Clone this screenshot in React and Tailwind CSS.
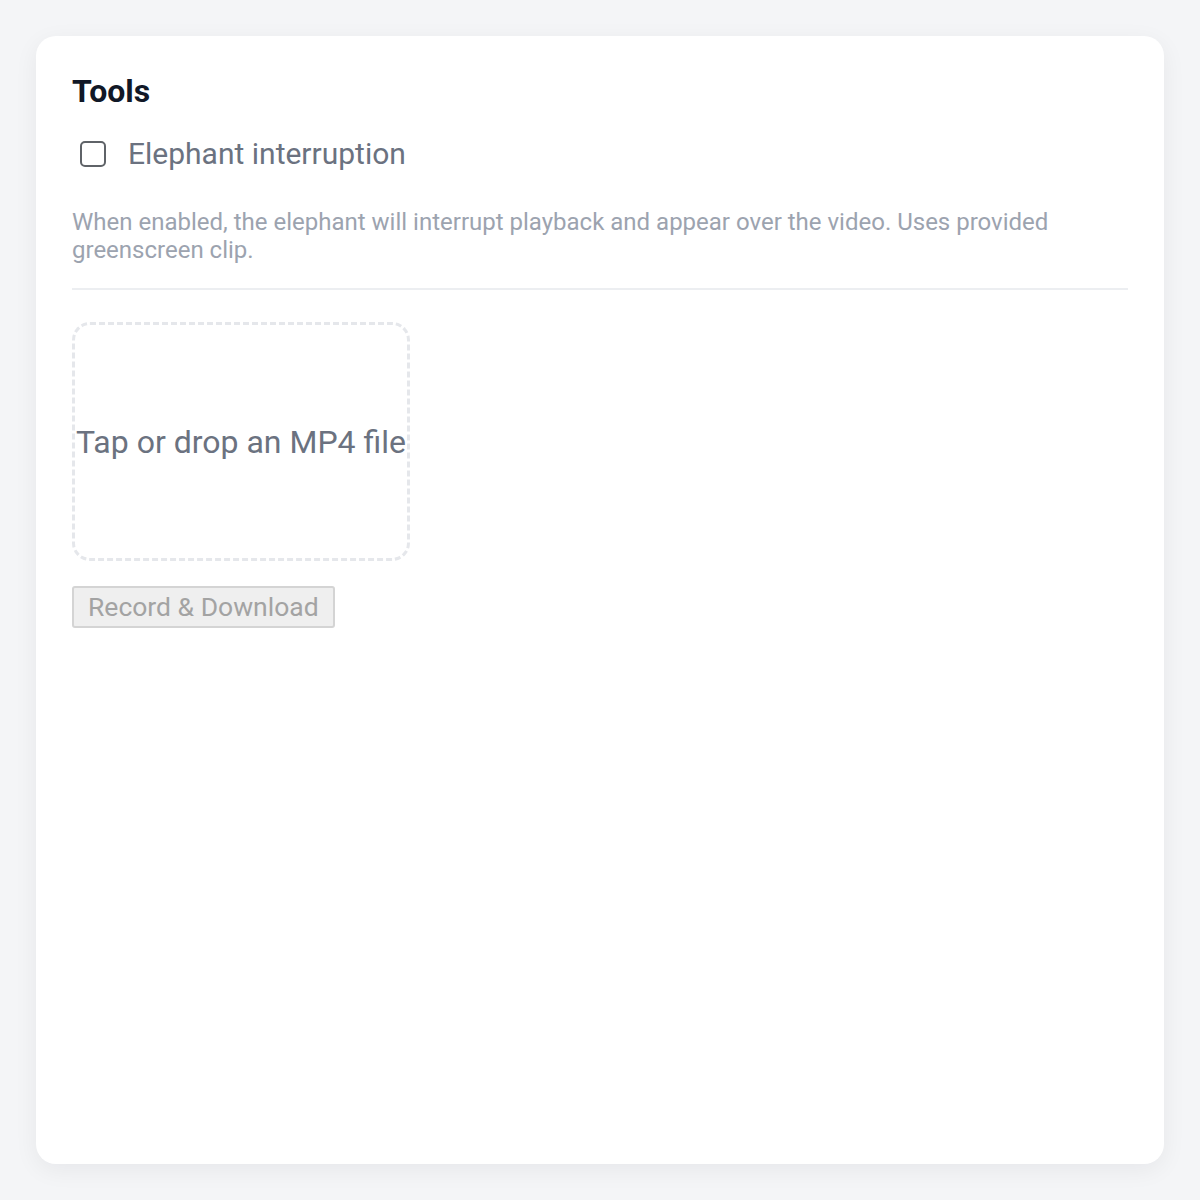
export default function App() {
  return (
    <div className="min-h-[1200px] w-full bg-[#f4f5f7] p-[36px] font-['Roboto',sans-serif]">
      <div className="h-[1128px] rounded-[20px] bg-white px-[36px] pt-[36px] shadow-[0_6px_24px_rgba(17,24,39,0.06)]">
        <h2 className="text-[32px] font-bold leading-[38px] text-[#111827]">Tools</h2>

        {/* Toggle */}
        <label className="mt-[24px] flex h-[40px] items-center">
          <span className="ml-[8px] h-[26px] w-[26px] rounded-[5px] border-2 border-[#5f6368] bg-white" />
          <span className="ml-[22px] text-[30px] leading-[40px] text-[#6b7280]">Elephant interruption</span>
        </label>

        <p className="mt-[34px] text-[24px] leading-[28px] text-[#9ca3af]">
          When enabled, the elephant will interrupt playback and appear over the video. Uses provided greenscreen clip.
        </p>

        <div className="mt-[24px] h-[2px] bg-[#eceef1]" />

        {/* Drop zone */}
        <div className="mt-[32px] flex h-[239px] w-[338px] items-center justify-center rounded-[18px] border-[3px] border-dashed border-[#e5e7eb]">
          <span className="whitespace-nowrap text-[32px] text-[#6b7280]">Tap or drop an MP4 file</span>
        </div>

        <button
          disabled
          className="mt-[25px] flex h-[42px] items-center rounded-[3px] border-2 border-[#d4d4d4] bg-[#efefef] px-[14px] text-[26.5px] text-[#a3a3a3]"
        >
          Record &amp; Download
        </button>
      </div>
    </div>
  );
}
